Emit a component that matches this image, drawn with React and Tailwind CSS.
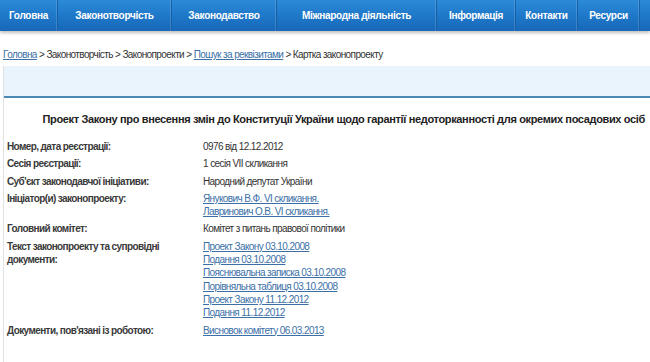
import React from "react";

const navItems = [
  { t: "Головна", w: "w-[58px]" },
  { t: "Законотворчість", w: "w-[114px]" },
  { t: "Законодавство", w: "w-[105px]" },
  { t: "Міжнародна діяльність", w: "w-[160px]" },
  { t: "Інформація", w: "w-[79px]" },
  { t: "Контакти", w: "w-[62px]" },
  { t: "Ресурси", w: "w-[62px]" },
];

const rows = [
  { l: ["Номер, дата реєстрації:"], v: ["0976 від 12.12.2012"] },
  { l: ["Сесія реєстрації:"], v: ["1 сесія VII скликання"] },
  { l: ["Суб'єкт законодавчої ініціативи:"], v: ["Народний депутат України"] },
  { l: ["Ініціатор(и) законопроекту:"], v: ["Янукович В.Ф. VI скликання.", "Лавринович О.В. VI скликання."], link: true },
  { l: ["Головний комітет:"], v: ["Комітет з питань правової політики"] },
  {
    l: ["Текст законопроекту та супровідні", "документи:"],
    v: [
      "Проект Закону 03.10.2008",
      "Подання 03.10.2008",
      "Пояснювальна записка 03.10.2008",
      "Порівняльна таблиця 03.10.2008",
      "Проект Закону 11.12.2012",
      "Подання 11.12.2012",
    ],
    link: true,
  },
  { l: ["Документи, пов'язані із роботою:"], v: ["Висновок комітету 06.03.2013"], link: true },
];

export default function App() {
  return (
    <div className="w-[650px] h-[362px] bg-white overflow-hidden font-['Liberation_Sans',Arial,sans-serif]">
      <div className="h-[31px] flex bg-gradient-to-b from-[#2b8ad8] via-[#1f78c9] to-[#1768b8] shadow-[0_2px_3px_rgba(0,0,0,0.25)]">
        {navItems.map((n, i) => (
          <div
            key={i}
            className={`${n.w} shrink-0 h-full flex items-center justify-center border-r border-[#1560a8] shadow-[inset_-1px_0_0_rgba(255,255,255,0.15)] text-white text-[10px] font-bold tracking-[-0.3px]`}
          >
            {n.t}
          </div>
        ))}
      </div>
      <div className="pt-[17px] pl-[3px] text-[10px] leading-[13px] text-[#333] tracking-[-0.6px]">
        <a className="text-[#3b6fa6] underline">Головна</a> &gt; Законотворчість &gt; Законопроекти &gt;{" "}
        <a className="text-[#3b6fa6] underline">Пошук за реквізитами</a> &gt; Картка законопроекту
      </div>
      <div className="ml-[3px] mt-[5px] border-l border-[#e2e2e2] h-[300px]">
        <div className="h-[32px] bg-[#eaf4fc] border-b-2 border-[#4b88b6]"></div>
        <div className="mt-[14px] pr-[5px] text-right text-[11px] leading-[14px] font-bold text-[#222] tracking-[-0.35px]">
          Проект Закону про внесення змін до Конституції України щодо гарантії недоторканності для окремих посадових осіб
        </div>
        <div className="mt-[14px] pl-[3px] flex flex-col gap-[4px] text-[10px] leading-[13.3px] tracking-[-0.6px]">
          {rows.map((r, i) => (
            <div key={i} className="flex">
              <div className="w-[196px] shrink-0 text-[#3a3a3a] font-bold">
                {r.l.map((x, j) => (
                  <div key={j}>{x}</div>
                ))}
              </div>
              <div className="text-[#333]">
                {r.v.map((x, j) => (
                  <div key={j}>
                    {r.link ? <a className="text-[#3b6fa6] underline">{x}</a> : x}
                  </div>
                ))}
              </div>
            </div>
          ))}
        </div>
      </div>
    </div>
  );
}
